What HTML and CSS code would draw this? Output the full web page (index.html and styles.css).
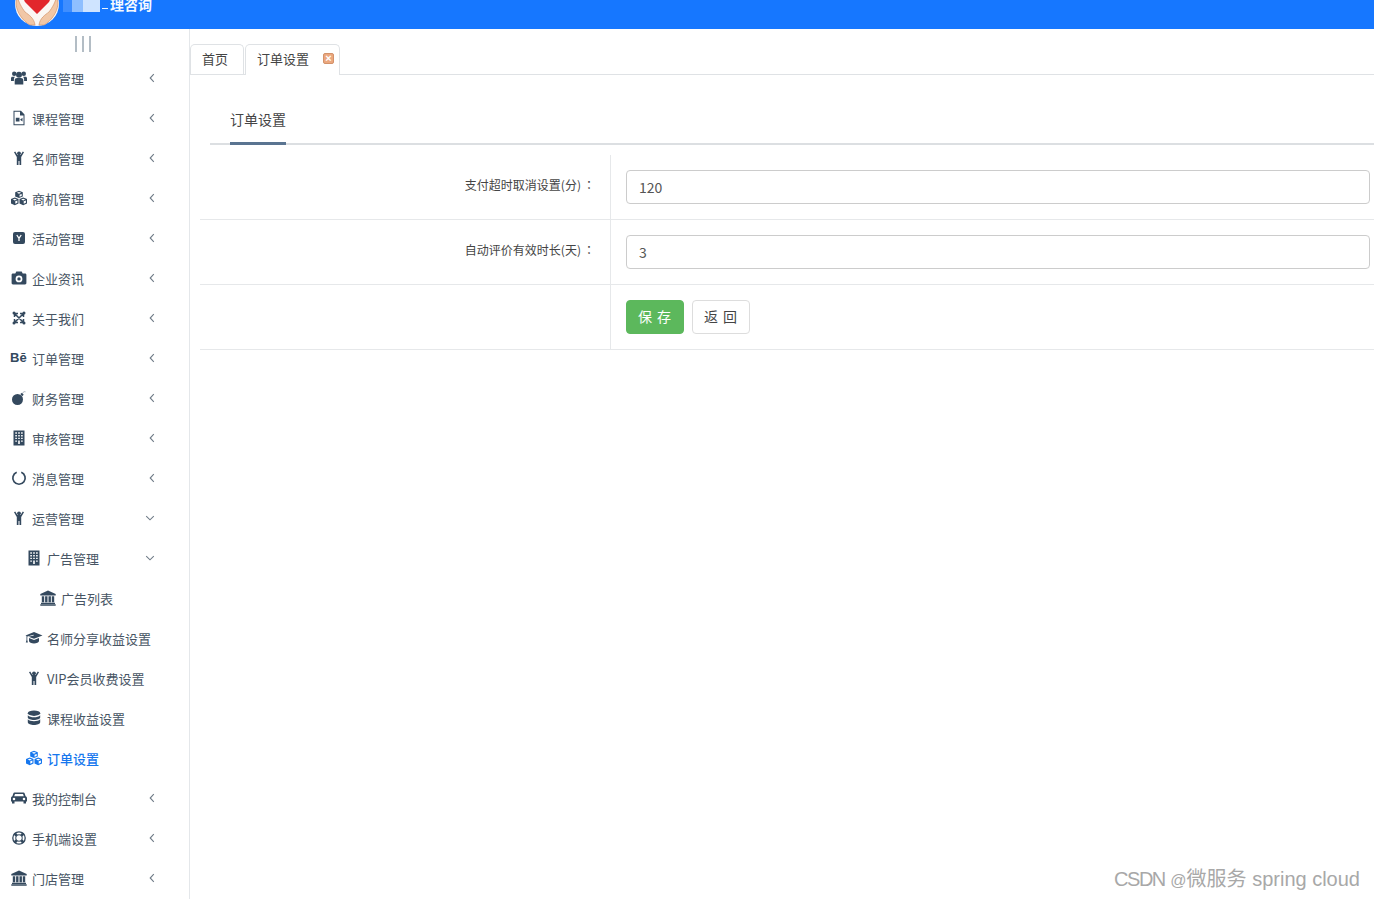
FILE: index.html

```html
<!DOCTYPE html>
<html lang="en">
<head>
    <meta charset="UTF-8">
    <meta name="viewport" content="width=device-width, initial-scale=1.0">
    <title>订单设置</title>
    <link rel="stylesheet" href="styles.css">
</head>
<body>
    <svg class="sprites" width="0" height="0">
        <symbol id="i-users" viewBox="0 0 16 16">
            <circle cx="3.200" cy="3.800" r="2.200"/><circle cx="12.800" cy="3.800" r="2.200"/><circle cx="8" cy="4.800" r="3"/>
            <path d="M0 11V8.300C0 7.300.6 6.700 1.400 6.700h2.500c-.4.6-.8 1.300-1 2.200V11zM16 11V8.300c0-1-.6-1.600-1.400-1.600h-2.500c.4.6.8 1.300 1 2.200V11zM3.700 14.500v-4.300C3.700 8.800 4.700 8 6 8h4c1.300 0 2.300.8 2.300 2.200v4.300z"/>
        </symbol>
        <symbol id="i-file" viewBox="0 0 16 16">
            <path d="M2.500.8h7.500L13.500 4.500V15.200h-11zM3.500 1.800V14.200h9V5.500H9V1.800z"/>
            <path d="M4.800 7.800h3.700v3.700H4.800zM9 9.700 11.500 7.800v3.700z"/>
        </symbol>
        <symbol id="i-child" viewBox="0 0 16 16">
            <circle cx="8" cy="3.300" r="1.900"/>
            <path d="M3 2.200 4.200 1.400 6.500 5h3L11.800 1.400 13 2.200 10.200 7V15H8.500v-4h-1v4H5.800V7z"/>
        </symbol>
        <symbol id="i-cubes" viewBox="0 0 18 16">
            <path d="M9 .8l3.800 1.500v4.200L9 8 5.200 6.500V2.300zM9 2 6.800 2.800 9 3.700 11.200 2.800zM9.500 4.800v2l2.200-.9V4z"/>
            <path d="M4.800 7.500l3.700 1.500v4.500L4.800 15.200 1 13.500V9zM4.800 8.700 2.700 9.500l2.100.9 2.100-.9zM5.300 11.300v2.500l2.100-1v-2.300z"/>
            <path d="M13.200 7.500 17 9v4.500L13.200 15.200l-3.700-1.700V9zM13.200 8.700l-2.100.8 2.100.9 2.100-.9zM13.700 11.300v2.500l2.200-1v-2.300z"/>
        </symbol>
        <symbol id="i-yc" viewBox="0 0 16 16">
            <rect x="2" y="2" width="12" height="12" rx="2"/>
            <path d="M5.800 5 8 8.300 10.200 5M8 8.300V11" fill="none" stroke="#fff" stroke-width="1.300"/>
        </symbol>
        <symbol id="i-camera" viewBox="0 0 16 16">
            <path fill-rule="evenodd" d="M5.300 1.500h5.400l1 2H14c.9 0 1.400.6 1.400 1.400v8.200c0 .8-.5 1.400-1.400 1.400H2c-.9 0-1.400-.6-1.400-1.400V4.900C.6 4.100 1.100 3.500 2 3.500h2.300zM8 5.500a3.400 3.400 0 1 0 0 6.800 3.400 3.400 0 0 0 0-6.800zM8 7.200a1.700 1.700 0 1 1 0 3.400 1.700 1.700 0 0 1 0-3.400z"/>
        </symbol>
        <symbol id="i-joomla" viewBox="0 0 16 16">
            <path d="M3.500 3.500 12.500 12.500M12.500 3.500 3.500 12.500M3.500 3.500H7M3.500 3.500V7M12.500 3.500H9M12.500 3.500V7M3.500 12.500H7M3.500 12.500V9M12.500 12.500H9M12.500 12.500V9" fill="none" stroke="#34495e" stroke-width="1.500"/>
            <circle cx="3" cy="3" r="1.500"/><circle cx="13" cy="3" r="1.500"/><circle cx="3" cy="13" r="1.500"/><circle cx="13" cy="13" r="1.500"/>
        </symbol>
        <symbol id="i-bomb" viewBox="0 0 16 16">
            <circle cx="6.500" cy="9.500" r="5.500"/>
            <path d="M9.300 4 11 2.800 12.700 4.800 11.200 6.200z"/>
            <path d="M11.800 3C12.300 1.800 13.200 1.400 14.500 1.800" fill="none" stroke="#8a97a3" stroke-width=".7"/>
        </symbol>
        <symbol id="i-building" viewBox="0 0 16 16">
            <path fill-rule="evenodd" d="M2.500.5h11v15h-11zM4.300 2.300v1.400h1.600V2.300zM7.200 2.300v1.400h1.600V2.300zM10.100 2.300v1.400h1.600V2.300zM4.300 5v1.400h1.600V5zM7.200 5v1.400h1.600V5zM10.100 5v1.400h1.600V5zM4.300 7.700v1.400h1.600V7.700zM7.200 7.700v1.400h1.600V7.700zM10.100 7.700v1.400h1.600V7.700zM4.300 10.400v1.400h1.600v-1.400zM10.100 10.400v1.400h1.600v-1.400zM7.200 10.400v3.600h1.600v-3.600z"/>
        </symbol>
        <symbol id="i-notch" viewBox="0 0 16 16">
            <path d="M10.300 2.300a6.200 6.200 0 1 1-4.600 0" fill="none" stroke="#34495e" stroke-width="1.700"/>
        </symbol>
        <symbol id="i-bank" viewBox="0 0 16 16">
            <path d="M8 .5 15.700 4V5.500H.3V4zM1.800 6.300h2.400v6H1.800zM5.100 6.300h2.400v6H5.100zM8.500 6.300h2.400v6H8.500zM11.800 6.300h2.400v6h-2.400zM1 12.800h14V14H1zM.3 14.300h15.400v1.400H.3z"/>
        </symbol>
        <symbol id="i-cap" viewBox="0 0 18 16">
            <path d="M9 2 17.500 5.500 9 8.800 3.500 6.800 8.800 5.400l-.2-.6L2.300 6.500V10l.6 2.500H.8L1.500 10V6l-1-.5z"/>
            <path d="M4 8 9 10 14 8V11c0 1.500-2.500 2.500-5 2.500S4 12.500 4 11z"/>
        </symbol>
        <symbol id="i-database" viewBox="0 0 16 16">
            <ellipse cx="8" cy="3.200" rx="6.200" ry="2.700"/>
            <path d="M1.800 5.200C3 6.800 5.500 7.200 8 7.200s5-.4 6.200-2V7.500C14.200 9 11 10 8 10S1.800 9 1.800 7.500z"/>
            <path d="M1.800 9.300C3 10.800 5.500 11.200 8 11.200s5-.4 6.200-1.900v3C14.200 14 11 15 8 15s-6.200-1-6.200-2.700z"/>
        </symbol>
        <symbol id="i-car" viewBox="0 0 16 16">
            <path fill-rule="evenodd" d="M3.500 2.500h9c.6 0 1 .3 1.200.9l.9 2.800c.8.3 1.400 1 1.400 1.900V11.500h-1V13.500h-2.500v-2H3.500v2H1v-2H0V8.100C0 7.200.6 6.500 1.400 6.200l.9-2.800C2.500 2.800 2.900 2.500 3.500 2.500zM4 4 3.200 6.300h9.600L12 4zM3 7.700a1.300 1.300 0 1 0 0 2.600 1.300 1.300 0 0 0 0-2.600zM13 7.700a1.300 1.300 0 1 0 0 2.600 1.300 1.300 0 0 0 0-2.600z"/>
        </symbol>
        <symbol id="i-ring" viewBox="0 0 16 16">
            <circle cx="8" cy="8" r="6.200" fill="none" stroke="#34495e" stroke-width="1.300"/>
            <circle cx="8" cy="8" r="3.300" fill="none" stroke="#34495e" stroke-width="1"/>
            <path d="M3.300 3.300 5.800 5.800M12.700 3.300 10.200 5.800M3.300 12.700 5.800 10.200M12.700 12.700 10.200 10.200" fill="none" stroke="#34495e" stroke-width="2.800"/>
        </symbol>
        <symbol id="i-left" viewBox="0 0 10 10">
            <path d="M6.800 1.200 3.200 5l3.600 3.800" fill="none" stroke="#6f7b87" stroke-width="1.100"/>
        </symbol>
        <symbol id="i-down" viewBox="0 0 10 10">
            <path d="M1.200 3.200 5 6.800l3.800-3.600" fill="none" stroke="#6f7b87" stroke-width="1.100"/>
        </symbol>
    </svg>

    <header class="topbar">
        <svg class="logo" viewBox="0 0 44 44">
            <circle cx="22" cy="22" r="22" fill="#fbf7f3"/>
            <path d="M22 32 10 20C6 13 11 6 16 6c3 0 5 2 6 4 1-2 3-4 6-4 5 0 10 7 6 14z" fill="#e2272c"/>
            <path d="M2 12C3 20 7 26 10 30c4 3 9 6 10 13h-5C8 39 2 31 1 22zM42 12C41 20 37 26 34 30c-4 3-9 6-10 13h5c7-4 13-12 14-21z" fill="#f1c7a6" stroke="#d79c74" stroke-width=".8"/>
        </svg>
        <span class="brand-mask"></span>
        <span class="brand">理咨询</span>
    </header>

    <div class="layout">
        <aside class="sidebar">
            <div class="collapse"><span></span><span></span><span></span></div>
            <ul class="menu">
                <li><svg class="ico"><use href="#i-users"/></svg><span class="label">会员管理</span><svg class="arrow"><use href="#i-left"/></svg></li>
                <li><svg class="ico"><use href="#i-file"/></svg><span class="label">课程管理</span><svg class="arrow"><use href="#i-left"/></svg></li>
                <li><svg class="ico"><use href="#i-child"/></svg><span class="label">名师管理</span><svg class="arrow"><use href="#i-left"/></svg></li>
                <li><svg class="ico"><use href="#i-cubes"/></svg><span class="label">商机管理</span><svg class="arrow"><use href="#i-left"/></svg></li>
                <li><svg class="ico"><use href="#i-yc"/></svg><span class="label">活动管理</span><svg class="arrow"><use href="#i-left"/></svg></li>
                <li><svg class="ico"><use href="#i-camera"/></svg><span class="label">企业资讯</span><svg class="arrow"><use href="#i-left"/></svg></li>
                <li><svg class="ico"><use href="#i-joomla"/></svg><span class="label">关于我们</span><svg class="arrow"><use href="#i-left"/></svg></li>
                <li><span class="ico ico-text">Bē</span><span class="label">订单管理</span><svg class="arrow"><use href="#i-left"/></svg></li>
                <li><svg class="ico"><use href="#i-bomb"/></svg><span class="label">财务管理</span><svg class="arrow"><use href="#i-left"/></svg></li>
                <li><svg class="ico"><use href="#i-building"/></svg><span class="label">审核管理</span><svg class="arrow"><use href="#i-left"/></svg></li>
                <li><svg class="ico"><use href="#i-notch"/></svg><span class="label">消息管理</span><svg class="arrow"><use href="#i-left"/></svg></li>
                <li><svg class="ico"><use href="#i-child"/></svg><span class="label">运营管理</span><svg class="arrow arrow-down"><use href="#i-down"/></svg></li>
                <li class="sub"><svg class="ico"><use href="#i-building"/></svg><span class="label">广告管理</span><svg class="arrow arrow-down"><use href="#i-down"/></svg></li>
                <li class="sub2"><svg class="ico"><use href="#i-bank"/></svg><span class="label">广告列表</span></li>
                <li class="sub"><svg class="ico"><use href="#i-cap"/></svg><span class="label">名师分享收益设置</span></li>
                <li class="sub"><svg class="ico"><use href="#i-child"/></svg><span class="label">VIP会员收费设置</span></li>
                <li class="sub"><svg class="ico"><use href="#i-database"/></svg><span class="label">课程收益设置</span></li>
                <li class="sub active"><svg class="ico"><use href="#i-cubes"/></svg><span class="label">订单设置</span></li>
                <li><svg class="ico"><use href="#i-car"/></svg><span class="label">我的控制台</span><svg class="arrow"><use href="#i-left"/></svg></li>
                <li><svg class="ico"><use href="#i-ring"/></svg><span class="label">手机端设置</span><svg class="arrow"><use href="#i-left"/></svg></li>
                <li><svg class="ico"><use href="#i-bank"/></svg><span class="label">门店管理</span><svg class="arrow"><use href="#i-left"/></svg></li>
            </ul>
        </aside>

        <main class="content">
            <div class="tabs">
                <div class="tab">首页</div>
                <div class="tab tab-current">订单设置<span class="tab-close">×</span></div>
            </div>

            <div class="panel">
                <div class="subnav"><span class="subnav-item">订单设置</span></div>

                <form class="form">
                    <div class="row">
                        <label class="row-label">支付超时取消设置(分)<span class="colon">：</span></label>
                        <div class="row-field"><input class="input" type="text" value="120"></div>
                    </div>
                    <div class="row">
                        <label class="row-label">自动评价有效时长(天)<span class="colon">：</span></label>
                        <div class="row-field"><input class="input" type="text" value="3"></div>
                    </div>
                    <div class="row">
                        <div class="row-label"></div>
                        <div class="row-field">
                            <button class="btn btn-save" type="button">保 存</button>
                            <button class="btn btn-back" type="button">返 回</button>
                        </div>
                    </div>
                </form>
            </div>
        </main>
    </div>

    <div class="watermark"><span class="wm-name">CSDN</span> <span class="wm-at">@</span>微服务 spring cloud</div>
</body>
</html>
```

FILE: styles.css

```css
* {
    box-sizing: border-box;
}

html, body {
    height: 100%;
}

body {
    margin: 0;
    overflow: hidden;
    background: #fff;
    color: #333;
    font-family: "Noto Sans CJK SC", "Noto Sans", sans-serif;
    font-size: 13px;
}

.sprites {
    position: absolute;
}

.topbar {
    display: flex;
    align-items: flex-end;
    height: 29px;
    overflow: hidden;
    background: #1677ff;
}

.logo {
    flex: none;
    width: 44px;
    height: 44px;
    margin: 0 4px 3px 15px;
}

.brand-mask {
    width: 45px;
    height: 12px;
    margin-bottom: 17px;
    background:
        linear-gradient(#eaf3ff, #eaf3ff) no-repeat 39px 8px / 6px 1px,
        linear-gradient(to right, #3f8eff 0 24%, #8fbfff 24% 55%, #cfe4ff 55% 100%) no-repeat 0 0 / 37px 100%;
}

.brand {
    margin: 0 0 15px 2px;
    color: #f4f9ff;
    font-size: 14px;
    font-weight: 700;
    line-height: 20px;
}

.layout {
    display: flex;
    height: 870px;
}

.sidebar {
    flex: none;
    width: 190px;
    border-right: 1px solid #e4e7ea;
}

.collapse {
    display: flex;
    justify-content: center;
    gap: 5px;
    height: 30px;
    padding-top: 7px;
    margin-left: -23px;
}

.collapse span {
    width: 2px;
    height: 16px;
    background: #b3bdc5;
}

.menu {
    list-style: none;
    margin: 0;
    padding: 0;
}

.menu li {
    display: flex;
    align-items: center;
    height: 40px;
    padding-left: 10px;
    color: #475564;
    fill: #34495e;
}

.menu li.sub {
    padding-left: 25px;
}

.menu li.sub2 {
    padding-left: 39px;
}

.menu li.active {
    color: #1677ee;
    fill: #1677ee;
    font-weight: 500;
}

.ico {
    flex: none;
    width: 18px;
    height: 16px;
    margin: 0 4px 2px 0;
}

.ico-text {
    color: #34495e;
    font-family: "Liberation Sans", sans-serif;
    font-size: 13px;
    font-weight: 700;
    line-height: 16px;
}

.label {
    flex: none;
    white-space: nowrap;
    line-height: 20px;
}

.arrow {
    width: 10px;
    height: 10px;
    margin: 0 32px 2px auto;
}

.arrow-down {
    margin-right: 34px;
}

.content {
    flex: 1;
    min-width: 0;
    padding-top: 15px;
}

.tabs {
    display: flex;
    gap: 1px;
    height: 31px;
    border-bottom: 1px solid #dfe2e5;
}

.tab {
    width: 54px;
    height: 30px;
    padding-left: 11px;
    border: 1px solid #dfe2e5;
    border-bottom: 0;
    border-radius: 5px 5px 0 0;
    color: #444;
    line-height: 27px;
}

.tab-current {
    position: relative;
    display: flex;
    width: 95px;
    height: 31px;
    background: #fff;
    line-height: 28px;
}

.tab-close {
    position: absolute;
    top: 8px;
    right: 5px;
    width: 11px;
    height: 11px;
    border: 1px solid #d3926a;
    border-radius: 2px;
    background: #eba77e;
    color: #fff;
    font-family: "Liberation Sans", sans-serif;
    font-size: 11px;
    font-weight: 700;
    line-height: 9px;
    text-align: center;
}

.panel {
    padding-left: 10px;
}

.subnav {
    height: 70px;
    margin-left: 10px;
    padding: 25px 0 0 20px;
    border-bottom: 2px solid #dcdfe2;
}

.subnav-item {
    display: block;
    width: 56px;
    height: 45px;
    border-bottom: 3px solid #5a7491;
    color: #444;
    font-size: 14px;
    line-height: 38px;
    white-space: nowrap;
}

.form {
    margin-top: 10px;
}

.row {
    display: flex;
    height: 65px;
    border-bottom: 1px solid #e6e8ea;
}

.row-label {
    flex: none;
    width: 411px;
    padding: 20px 15px 0 0;
    border-right: 1px solid #e6e8ea;
    color: #444;
    font-size: 12px;
    line-height: 20px;
    text-align: right;
}

.colon {
    margin-left: 2px;
    font-family: "Noto Sans CJK TC", sans-serif;
}

.row-field {
    flex: 1;
    display: flex;
    align-items: flex-start;
    gap: 8px;
    padding: 15px 4px 0 15px;
}

.input {
    width: 100%;
    height: 34px;
    padding: 0 12px;
    border: 1px solid #ccc;
    border-radius: 4px;
    color: #555;
    font-family: inherit;
    font-size: 14px;
}

.btn {
    width: 58px;
    height: 34px;
    padding: 0 0 2px;
    border: 1px solid #ddd;
    border-radius: 4px;
    font-family: inherit;
    font-size: 14px;
    letter-spacing: 1px;
}

.btn-save {
    background: #5cb85c;
    border-color: #5cb85c;
    color: #fff;
}

.btn-back {
    background: #fff;
    color: #444;
}

.watermark {
    position: absolute;
    right: 14px;
    bottom: 4px;
    color: #a8a8a8;
    font-family: "Liberation Sans", "Noto Sans CJK SC", sans-serif;
    font-size: 20px;
    line-height: 28px;
    white-space: nowrap;
}

.wm-name {
    letter-spacing: -1.500px;
}

.wm-at {
    font-size: 16px;
}
```
